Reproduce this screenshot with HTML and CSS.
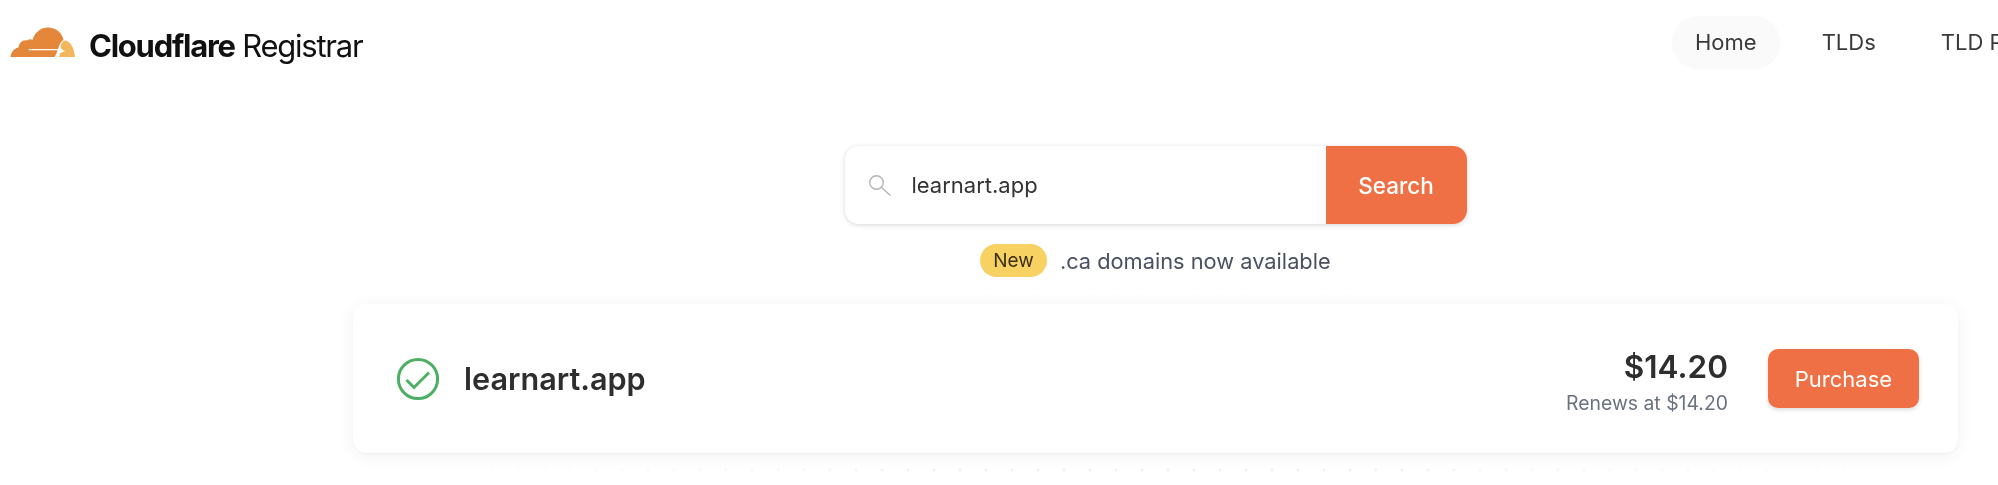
FILE: index.html
```html
<!DOCTYPE html>
<html lang="en">
<head>
    <meta charset="UTF-8">
    <meta name="viewport" content="width=device-width, initial-scale=1.0">
    <title>Cloudflare Registrar</title>
    <link rel="stylesheet" href="styles.css">
</head>
<body>
    <header class="topbar">
        <div class="brand">
            <svg class="brand-logo" viewBox="0 0 65 30" width="65" height="30" aria-hidden="true">
                <path fill="#e4873a" d="M0.5 30C1 25 4.5 21 8.5 20.5C9 15.5 13 12.5 17 13.5C19 12 21 12 22.5 12.8C25 5 31 0.5 38 0.5C46 0.5 52 5.5 53.5 13C52 14 50.5 15.5 49.5 18L48 22H19C18.5 22 18.5 23.2 19 23.2H47.5C46.8 26 45.5 28.5 44.5 30Z"/>
                <path fill="#f2b65c" d="M49 30C49.8 28.5 50 27.5 49.8 26.5C52 25 53 24.5 55.5 24C53 23.5 51.5 22.5 50.5 20.5C51.2 16.5 53 13.5 55 13.5C60 14 64 20 65 30Z"/>
            </svg>
            <div class="brand-name"><b>Cloudflare</b> Registrar</div>
        </div>
        <nav class="nav">
            <a class="nav-item active">Home</a>
            <a class="nav-item">TLDs</a>
            <a class="nav-item">TLD Pricing</a>
        </nav>
    </header>

    <main class="content">
        <form class="search">
            <div class="search-field">
                <svg class="search-icon" viewBox="0 0 22 21" width="22" height="21" aria-hidden="true">
                    <circle cx="7.5" cy="7.5" r="6.8" fill="none" stroke="#b4b4b4" stroke-width="1.4"/>
                    <path d="M12.5 12.5L21.5 20.5" fill="none" stroke="#b4b4b4" stroke-width="1.4"/>
                </svg>
                <span class="search-value">learnart.app</span>
            </div>
            <button class="search-btn" type="button">Search</button>
        </form>

        <p class="notice"><span class="badge">New</span>.ca domains now available</p>

        <section class="result">
            <svg class="check" viewBox="0 0 44 44" width="44" height="44" aria-hidden="true">
                <circle cx="22" cy="22" r="19.6" fill="none" stroke="#4caf64" stroke-width="3"/>
                <path d="M10.5 23L18 30.5L33 15.5" fill="none" stroke="#4caf64" stroke-width="3"/>
            </svg>
            <div class="domain">learnart.app</div>
            <div class="price">
                <div class="price-now">$14.20</div>
                <div class="price-renew">Renews at $14.20</div>
            </div>
            <button class="buy-btn" type="button">Purchase</button>
        </section>
    </main>
</body>
</html>
```

FILE: styles.css
```css
html, body {
    margin: 0;
    padding: 0;
    height: 100%;
    overflow: hidden;
}

html {
    background-color: #fff;
}

body {
    font-family: Inter, "Liberation Sans", sans-serif;
    color: #333;
}

/* faint dot grid, fades out away from the result card */
body::before {
    content: "";
    position: fixed;
    inset: 0;
    z-index: -1;
    background-image: radial-gradient(circle, rgba(240, 110, 110, 0.12) 1.2px, transparent 1.8px);
    background-size: 26px 26px;
    background-position: 11px -11px;
    -webkit-mask-image: radial-gradient(ellipse 800px 280px at 1155px 510px, #000 30%, transparent 100%);
    mask-image: radial-gradient(ellipse 800px 280px at 1155px 510px, #000 30%, transparent 100%);
}

.topbar {
    display: flex;
    justify-content: space-between;
    align-items: center;
    height: 84px;
    padding-left: 10px;
}

.brand {
    display: flex;
    align-items: center;
    gap: 14px;
}

.brand-name {
    padding-top: 6px;
    font-size: 31px;
    letter-spacing: -1.25px;
    color: #111;
    white-space: nowrap;
}

.brand-name b {
    font-weight: 700;
}

.nav {
    display: flex;
    gap: 19px;
    width: 326px;
    flex: none;
}

.nav-item {
    padding: 13px 23px;
    font-size: 22px;
    line-height: 26px;
    color: #3a3a3a;
    border-radius: 26px;
    white-space: nowrap;
}

.nav-item.active {
    background-color: #fafafa;
    box-shadow: 0 1px 2px rgba(0, 0, 0, 0.03);
}

.content {
    display: flex;
    flex-direction: column;
    align-items: center;
    margin-left: 313px;
    padding: 62px 40px 0;
}

.search {
    display: flex;
    width: 622px;
    height: 78px;
    border-radius: 14px;
    background-color: #fff;
    box-shadow: 0 1px 5px rgba(0, 0, 0, 0.16);
}

.search-field {
    flex: 1;
    display: flex;
    align-items: center;
    gap: 21px;
    padding-left: 24px;
}

.search-value {
    font-size: 22px;
    color: #333;
}

.search-btn {
    width: 141px;
    border: none;
    border-radius: 0 14px 14px 0;
    background-color: #ee7044;
    color: #fff;
    font-family: inherit;
    font-size: 22.5px;
    font-weight: 500;
}

.notice {
    display: flex;
    align-items: center;
    gap: 13px;
    height: 33px;
    margin: 20px 0 0;
    font-size: 21.8px;
    color: #4a5160;
}

.badge {
    padding: 1px 13px 0;
    line-height: 32px;
    border-radius: 17px;
    background-color: #f8d163;
    color: #3a2f10;
    font-size: 19px;
}

.result {
    display: flex;
    align-items: center;
    box-sizing: border-box;
    width: 1605px;
    height: 149px;
    margin-top: 27px;
    padding: 0 39px 0 43px;
    flex: none;
    border-radius: 14px;
    background-color: #fff;
    box-shadow: 0 1px 3px rgba(0, 0, 0, 0.04), 0 3px 18px rgba(0, 0, 0, 0.06);
}

.check {
    flex: none;
}

.domain {
    flex: 1;
    margin-left: 24px;
    font-size: 30.6px;
    font-weight: 600;
    color: #2e2e2e;
}

.price {
    padding-top: 5px;
    text-align: right;
}

.price-now {
    font-size: 31.5px;
    font-weight: 600;
    line-height: 38px;
    color: #2e2e2e;
}

.price-renew {
    margin-top: 6px;
    font-size: 19.4px;
    line-height: 22px;
    color: #6b7280;
}

.buy-btn {
    width: 151px;
    height: 59px;
    margin-left: 40px;
    border: none;
    border-radius: 10px;
    background-color: #ee7044;
    color: #fff;
    font-family: inherit;
    font-size: 22px;
    box-shadow: 0 2px 4px rgba(0, 0, 0, 0.14);
}
```
